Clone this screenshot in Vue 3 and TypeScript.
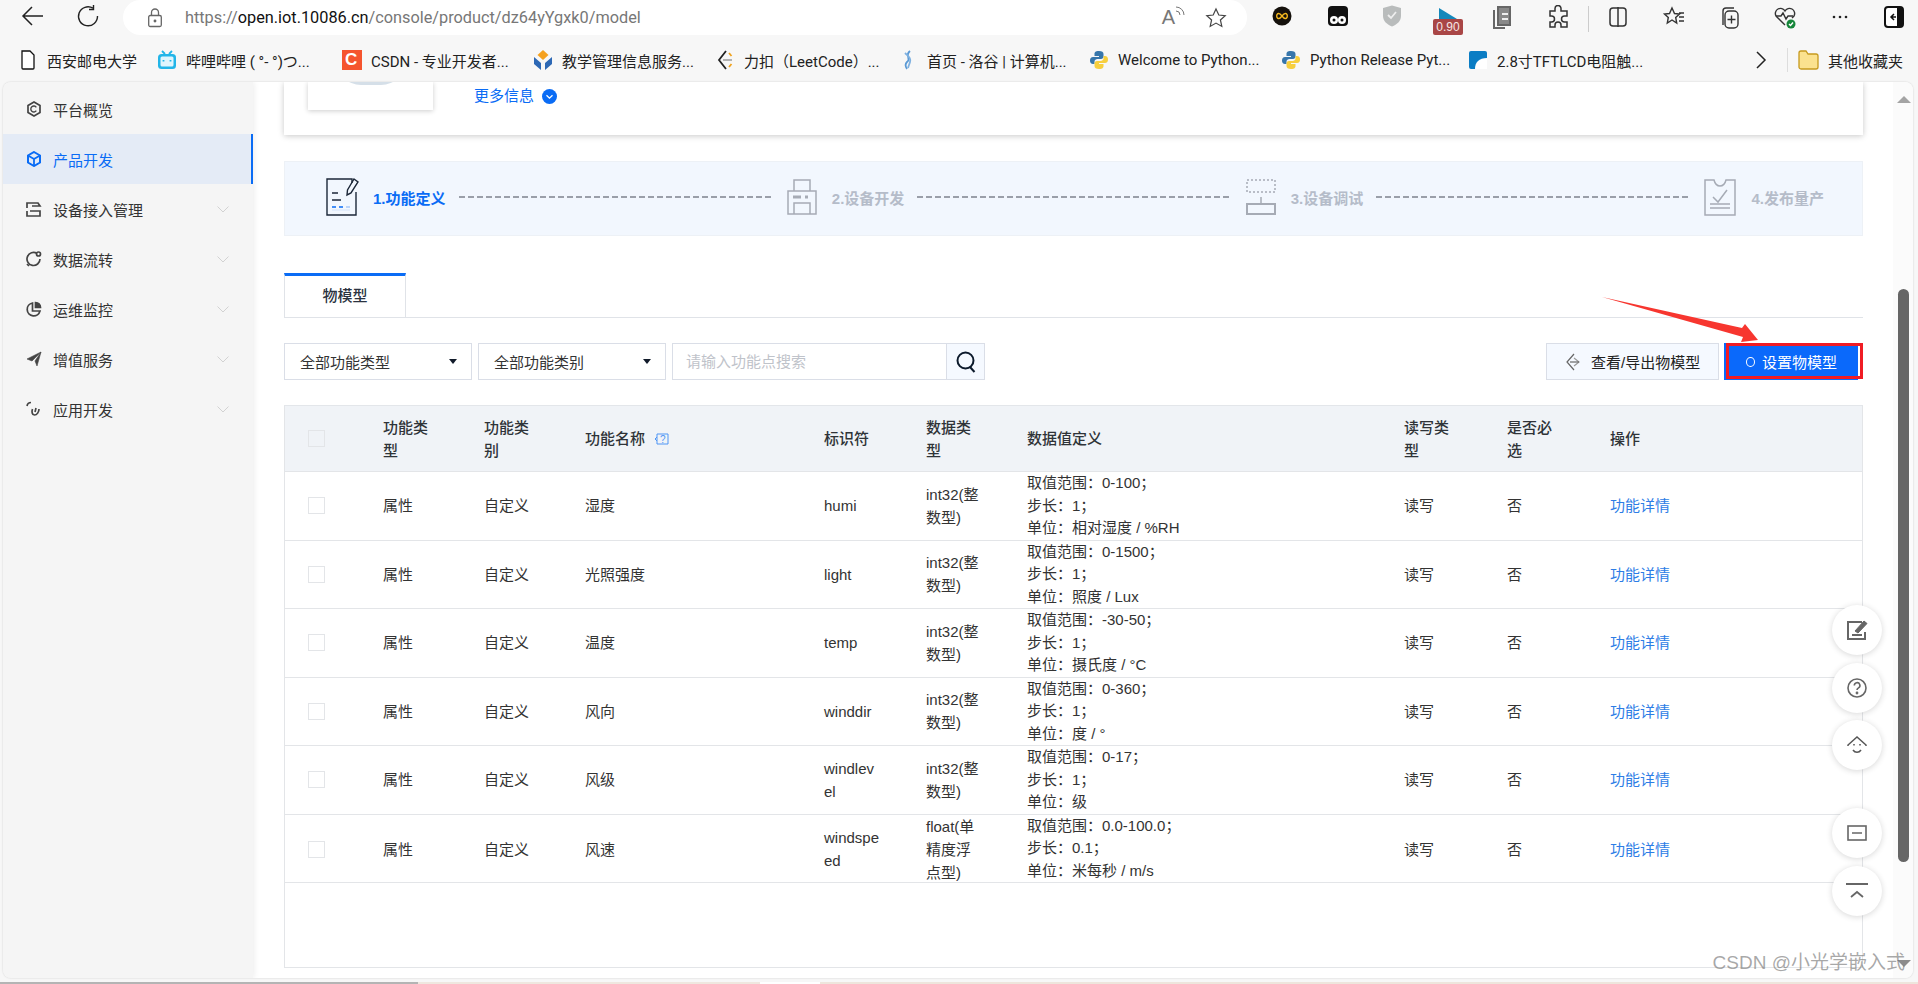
<script setup lang="ts">
interface Bookmark { key: string; label: string; width: number }
const bookmarks: Bookmark[] = [
  { key: 'doc', label: '西安邮电大学', width: 139 },
  { key: 'bili', label: '哔哩哔哩 ( °-  °)つ...', width: 185 },
  { key: 'csdn', label: 'CSDN - 专业开发者...', width: 191 },
  { key: 'edu', label: '教学管理信息服务...', width: 182 },
  { key: 'leet', label: '力扣（LeetCode）...', width: 183 },
  { key: 'luogu', label: '首页 - 洛谷 | 计算机...', width: 191 },
  { key: 'py', label: 'Welcome to Python...', width: 192 },
  { key: 'py', label: 'Python Release Pyt...', width: 187 },
  { key: 'tft', label: '2.8寸TFTLCD电阻触...', width: 305 }
]
const menu = [
  { key: 'home', label: '平台概览', arrow: false, active: false },
  { key: 'cube', label: '产品开发', arrow: false, active: true },
  { key: 'dev', label: '设备接入管理', arrow: true, active: false },
  { key: 'flow', label: '数据流转', arrow: true, active: false },
  { key: 'pie', label: '运维监控', arrow: true, active: false },
  { key: 'send', label: '增值服务', arrow: true, active: false },
  { key: 'app', label: '应用开发', arrow: true, active: false }
]
const rows = [
  { name: '湿度', id: 'humi', type: 'int32(整数型)', range: '0-100', step: '1', unit: '相对湿度 / %RH' },
  { name: '光照强度', id: 'light', type: 'int32(整数型)', range: '0-1500', step: '1', unit: '照度 / Lux' },
  { name: '温度', id: 'temp', type: 'int32(整数型)', range: '-30-50', step: '1', unit: '摄氏度 / °C' },
  { name: '风向', id: 'winddir', type: 'int32(整数型)', range: '0-360', step: '1', unit: '度 / °' },
  { name: '风级', id: 'windlevel', type: 'int32(整数型)', range: '0-17', step: '1', unit: '级' },
  { name: '风速', id: 'windspeed', type: 'float(单精度浮点型)', range: '0.0-100.0', step: '0.1', unit: '米每秒 / m/s' }
]
</script>

<template>
  <div class="browser">
    <header class="toolbar">
      <svg class="nav back" width="24" height="24" viewBox="0 0 24 24" fill="none" stroke="#222" stroke-width="1.5"><path d="M22 12H3M11 3l-9 9 9 9"/></svg>
      <svg class="nav reload" width="24" height="24" viewBox="0 0 24 24" fill="none" stroke="#222" stroke-width="1.4"><path d="M17 4.2A9.5 9.5 0 1 0 21.5 12"/><path d="M17.5 1v4.5H13"/></svg>
      <div class="address">
        <svg class="lock" width="16" height="20" viewBox="0 0 16 20" fill="none" stroke="#666" stroke-width="1.3"><rect x="1.7" y="7.5" width="12.6" height="11" rx="1.5"/><path d="M4.5 7.5V4.5a3.5 3.5 0 0 1 7 0v3"/><circle cx="8" cy="13" r=".8" fill="#666"/></svg>
        <span class="url"><i>https://</i>open.iot.10086.cn<i>/console/product/dz64yYgxk0/model</i></span>
        <span class="read">A<svg width="10" height="14" viewBox="0 0 10 14" fill="none" stroke="#777" stroke-width="1"><path d="M1 5a4 4 0 0 1 4 4M1 1a8 8 0 0 1 8 8"/></svg></span>
        <svg class="addr-star" width="22" height="22" viewBox="0 0 22 22" fill="none" stroke="#444" stroke-width="1.2"><path d="M11 2l2.8 6 6.4.7-4.8 4.3 1.4 6.4L11 16.100l-5.800 3.300 1.400-6.400L1.800 8.700 8.200 8z"/></svg>
      </div>
      <div class="ext-row">
        <svg class="ext e1" width="20" height="20" viewBox="0 0 20 20"><circle cx="10" cy="10" r="9.500" fill="#15110c"/><path d="M10 10c-1.500-2-3-3-4.200-2.300-1.500 1-1.500 3.600 0 4.600C7 13 8.500 12 10 10c1.500-2 3-3 4.200-2.300 1.500 1 1.500 3.600 0 4.600C13 13 11.500 12 10 10z" fill="none" stroke="#f5b81f" stroke-width="1.400"/></svg>
        <svg class="ext e2" width="20" height="20" viewBox="0 0 20 20"><path d="M4 0h12a4 4 0 0 1 4 4v12a4 4 0 0 1-4 4H4a4 4 0 0 1-4-4V4a4 4 0 0 1 4-4z" fill="#111"/><circle cx="6" cy="14" r="4" fill="#fff"/><circle cx="14" cy="14" r="4" fill="#fff"/><circle cx="6" cy="14" r="1.500" fill="#111"/><circle cx="14" cy="14" r="1.500" fill="#111"/></svg>
        <svg class="ext e3" width="20" height="22" viewBox="0 0 20 22"><path d="M1 3l9-2.500L19 3v8c0 5-4 8.500-9 10.500C5 19.500 1 16 1 11z" fill="#b9bcbc"/><path d="M6 10l3 3 5-6" fill="none" stroke="#eee" stroke-width="1.800"/></svg>
        <div class="ext e4"><svg width="18" height="11" viewBox="0 0 18 11"><path d="M0 0l18 11H0z" fill="#1488bb"/></svg><span class="badge">0.90</span></div>
        <svg class="ext e5" width="20" height="24" viewBox="0 0 20 24" fill="none" stroke="#666" stroke-width="2"><path d="M6 2h12v18H6z" fill="#888"/><path d="M2 5v18h11"/><path d="M10 9h6M10 14h6" stroke="#eee"/></svg>
        <svg class="ext e6" width="22" height="24" viewBox="0 0 22 24" fill="none" stroke="#333" stroke-width="1.500"><path d="M8 3.500a3 3 0 0 1 6 0V6h6v5h-2.500a3 3 0 0 0 0 6H20v5h-6v-2a3 3 0 0 0-6 0v2H3v-5h1.500a3 3 0 0 0 0-6H3V6h5z"/></svg>
        <span class="ext-sep"></span>
        <svg class="ext e7" width="20" height="22" viewBox="0 0 20 22" fill="none" stroke="#333" stroke-width="1.500"><rect x="2" y="2" width="16" height="18" rx="3"/><path d="M10 1v20"/></svg>
        <svg class="ext e8" width="24" height="24" viewBox="0 0 24 24" fill="none" stroke="#333" stroke-width="1.400"><path d="M10 3l2.500 5.500 5 .5-3.800 3.500 1 5.500L10 15l-4.700 3 1-5.500L2.500 9l5-.5zM17 8h5M17 12h5M17 16h5"/></svg>
        <svg class="ext e9" width="24" height="26" viewBox="0 0 24 26" fill="none" stroke="#333" stroke-width="1.400"><path d="M5 20V6a3 3 0 0 1 3-3h8"/><rect x="7" y="6" width="13" height="17" rx="4"/><path d="M13.500 10.500v8M9.500 14.500h8"/></svg>
        <svg class="ext e10" width="24" height="24" viewBox="0 0 24 24" fill="none" stroke="#333" stroke-width="1.400"><path d="M12 20l-9-9a5 5 0 0 1 9-5 5 5 0 0 1 9 5l-2 2"/><path d="M3 11h5l2-3 3 6 2-3h5"/><circle cx="18" cy="19" r="4.500" fill="#16863a" stroke="none"/><path d="M16 19l1.500 1.500 2.500-3" stroke="#fff"/></svg>
        <svg class="ext dots" width="16" height="4" viewBox="0 0 16 4" fill="#222"><circle cx="2" cy="2" r="1.300"/><circle cx="8" cy="2" r="1.300"/><circle cx="14" cy="2" r="1.300"/></svg>
        <svg class="ext e11" width="20" height="22" viewBox="0 0 20 22"><rect x="1" y="1" width="18" height="20" rx="3" fill="#fff" stroke="#111" stroke-width="2"/><rect x="13" y="2" width="5" height="18" fill="#111"/><path d="M10 8l-3 3 3 3M7 11h5" fill="none" stroke="#111" stroke-width="1.500"/></svg>
      </div>
    </header>

    <nav class="bookmarks">
      <div v-for="b in bookmarks" :key="b.label" class="bookmark" :style="{ width: b.width + 'px' }">
        <svg class="bm-ico" width="20" height="20" viewBox="0 0 20 20">
          <template v-if="b.key === 'doc'"><path d="M4 1h8l4 4v13a1 1 0 0 1-1 1H5a1 1 0 0 1-1-1z" fill="#fff" stroke="#111" stroke-width="1.300"/></template>
          <template v-else-if="b.key === 'bili'"><rect x="1" y="4" width="18" height="15" rx="3.500" fill="#22b5e8"/><path d="M5 1l3 3M15 1l-3 3" stroke="#22b5e8" stroke-width="1.800"/><rect x="3.500" y="6.500" width="13" height="10" rx="1.500" fill="#dff5fd"/><path d="M6.500 10v1.500M13.500 10v1.500" stroke="#22b5e8" stroke-width="1.800"/></template>
          <template v-else-if="b.key === 'edu'"><path d="M10 0l5.500 5L10 10 4.500 5z" fill="#f5a11e"/><path d="M1 7l7 6v7l-7-6zM19 7l-7 6v7l7-6z" fill="#2d68b5"/></template>
          <template v-else-if="b.key === 'leet'"><path d="M11 1L4 10l7 9" fill="none" stroke="#222" stroke-width="1.800"/><path d="M14 3l2.500 3M14 17l2.500-3" stroke="#f0a31e" stroke-width="1.800"/><path d="M8 10h9" stroke="#aaa" stroke-width="1.800"/></template>
          <template v-else-if="b.key === 'luogu'"><path d="M12 1C6 6 14 8 9 12c-2 2-2 4 0 7" fill="none" stroke="#5b9ad5" stroke-width="1.800"/><path d="M7 3c4 4 6 5 5 9-.5 2-1.500 4-2 6" fill="none" stroke="#7fb1e0" stroke-width="1.800"/></template>
          <template v-else-if="b.key === 'py'"><path d="M10 1C6 1 5.500 2.500 5.500 4v2H10v1H4C2 7 1 8.500 1 10.500S2 14 4 14h1.500v-2.500C5.500 10 7 9 8.500 9H12c1.500 0 2.500-1 2.500-2.500V4C14.500 2 13 1 10 1z" fill="#3776ab"/><path d="M10 19c4 0 4.500-1.500 4.500-3v-2H10v-1h6c2 0 3-1.500 3-3.500S18 6 16 6h-1.500v2.500C14.500 10 13 11 11.500 11H8c-1.500 0-2.500 1-2.500 2.500V16c0 2 1.500 3 4.500 3z" fill="#f7cf3e"/></template>
          <template v-else-if="b.key === 'tft'"><rect x="1" y="1" width="18" height="18" rx="2" fill="#0b7dc4"/><path d="M7 19c0-7 4-11 12-11v11z" fill="#fff"/></template>
          <template v-else><rect x="0" y="0" width="20" height="20" fill="#f5542e"/></template>
        </svg>
        <span v-if="b.key === 'csdn'" class="csdn-c">C</span>
        <span class="bm-text">{{ b.label }}</span>
      </div>
      <svg class="bm-more" width="12" height="20" viewBox="0 0 12 20" fill="none" stroke="#222" stroke-width="1.500"><path d="M2 2l8 8-8 8"/></svg>
      <span class="bm-sep"></span>
      <svg class="bm-folder" width="21" height="20" viewBox="0 0 21 20"><path d="M1 3a2 2 0 0 1 2-2h5l2 3h8a2 2 0 0 1 2 2v11a2 2 0 0 1-2 2H3a2 2 0 0 1-2-2z" fill="#fbe28f" stroke="#c79a1e" stroke-width="1.300"/></svg>
      <span class="bm-text bm-other">其他收藏夹</span>
    </nav>

    <div class="page">
      <aside class="sidebar">
        <div v-for="m in menu" :key="m.label" class="menu-item" :class="{ active: m.active }">
          <svg class="menu-ico" width="16" height="16" viewBox="0 0 16 16" fill="none" stroke="currentColor" stroke-width="1.700">
            <template v-if="m.key === 'home'"><path d="M8 1l6 3.500v7L8 15l-6-3.500v-7z"/><path d="M10.300 6.300a3 3 0 1 0 0 3.400" stroke-width="1.400"/></template>
            <template v-else-if="m.key === 'cube'"><path d="M8 1l6 3.500v7L8 15l-6-3.500v-7z" stroke-width="2"/><path d="M2 4.500L8 8l6-3.500M8 8v7" stroke-width="1.800"/></template>
            <template v-else-if="m.key === 'dev'"><path d="M1 7V2h11l2 3H6" /><path d="M1 10v5h13v-5H4"/></template>
            <template v-else-if="m.key === 'flow'"><path d="M11 2.500A6.500 6.500 0 1 0 14 8"/><circle cx="12.500" cy="3" r="2"/><path d="M1 13l2 2"/></template>
            <template v-else-if="m.key === 'pie'"><path d="M6.500 2a6.500 6.500 0 1 0 7.500 8H6.500z"/><path d="M9.500 1.500a5 5 0 0 1 5 5h-5z" fill="currentColor"/></template>
            <template v-else-if="m.key === 'send'"><path d="M15 1L1 8l5 2zM15 1l-4 14-2-5z" fill="currentColor" stroke-width=".6"/></template>
            <template v-else><path d="M1 5c.5-2.500 2-3.500 4-3.500M6.500 8c-1 2.500-.5 6 2 6s4.500-3 4.500-6"/><path d="M9 11l1-4" /></template>
          </svg>
          <span class="menu-label">{{ m.label }}</span>
          <svg v-if="m.arrow" class="menu-arrow" width="12" height="7" viewBox="0 0 12 7" fill="none" stroke="#d2d2d2" stroke-width="1"><path d="M.5.5L6 6 11.500.5"/></svg>
        </div>
      </aside>

      <main class="main">
        <section class="card">
          <div class="thumb"><span class="thumb-arc"></span></div>
          <span class="more">更多信息</span>
          <svg class="more-ico" width="15" height="15" viewBox="0 0 15 15"><circle cx="7.500" cy="7.500" r="7.500" fill="#0a6cf5"/><path d="M4.500 6.200l3 3 3-3" fill="none" stroke="#fff" stroke-width="1.300"/></svg>
        </section>

        <section class="steps">
          <svg class="step-ico" width="34" height="38" viewBox="0 0 34 38" fill="none" stroke="#1c2738" stroke-width="1.400"><path d="M26 5V1H1v36h29V14"/><path d="M28 1l4 3-7 11-4 2 .5-5z"/><path d="M6 15h6M6 22h9"/><path d="M6 29h4M13 29h4" stroke="#0a6cf5"/><path d="M20 29h4" stroke="#a8c8f8"/><path d="M6 32h18" stroke="#d4e3fa" stroke-width="1"/></svg>
          <span class="step-text on">1.功能定义</span>
          <span class="dash"></span>
          <svg class="step-ico" width="30" height="36" viewBox="0 0 30 36" fill="none" stroke="#a6abb5" stroke-width="1.500"><path d="M7 12V1h16v11"/><path d="M1 12h28v23H1z"/><path d="M7 35V24h16v11"/><path d="M6 18h8M18 18h3" stroke-width="3"/></svg>
          <span class="step-text">2.设备开发</span>
          <span class="dash"></span>
          <svg class="step-ico" width="30" height="36" viewBox="0 0 30 36" fill="none" stroke="#a6abb5" stroke-width="1.500"><path d="M1 1h28v12H1z" stroke-dasharray="2 2"/><path d="M15 18v7"/><path d="M1 25h28v10H1z" stroke-width="2"/></svg>
          <span class="step-text">3.设备调试</span>
          <span class="dash"></span>
          <svg class="step-ico" width="32" height="37" viewBox="0 0 32 37" fill="none" stroke="#a6abb5" stroke-width="1.500"><path d="M1 1h9c1 4 3 6 6 6s5-2 6-6h9v35H1z"/><path d="M9 18l5 5 9-12"/><path d="M6 25h20M6 29h20"/></svg>
          <span class="step-text">4.发布量产</span>
        </section>

        <div class="tabs"><div class="tab">物模型</div></div>

        <div class="filters">
          <div class="select">全部功能类型<i class="caret"></i></div>
          <div class="select">全部功能类别<i class="caret"></i></div>
          <div class="search">
            <span class="placeholder">请输入功能点搜索</span>
            <div class="search-btn"><svg width="20" height="22" viewBox="0 0 20 22" fill="none" stroke="#0c1a2b" stroke-width="2"><circle cx="9.500" cy="9.500" r="8"/><path d="M14 16l4.500 5"/></svg></div>
          </div>
          <span class="grow"></span>
          <div class="btn ghost">
            <svg width="14" height="18" viewBox="0 0 14 18" fill="none" stroke="#666" stroke-width="1.200"><path d="M8 1L1 9l7 8"/><path d="M8 5l5 4-5 4" stroke="#999"/><path d="M4 9h9"/></svg>
            <span>查看/导出物模型</span>
          </div>
          <div class="btn primary">
            <span class="ring"></span>
            <span>设置物模型</span>
            <span class="red-box"></span>
          </div>
        </div>

        <section class="table">
          <div class="tr thead">
            <div class="cell"><span class="check head-check"></span></div>
            <div class="cell">功能类型</div>
            <div class="cell">功能类别</div>
            <div class="cell name-head">功能名称
              <svg width="16" height="14" viewBox="0 0 16 14" fill="none" stroke="#4f95f5"><path d="M3 2v10M3 2h11v10H3M3 5L1 7l2 2"/><text x="6" y="11" font-size="10" fill="#4f95f5" stroke="none" font-family="Liberation Sans">?</text></svg>
            </div>
            <div class="cell">标识符</div>
            <div class="cell">数据类型</div>
            <div class="cell">数据值定义</div>
            <div class="cell">读写类型</div>
            <div class="cell">是否必选</div>
            <div class="cell">操作</div>
          </div>
          <div v-for="r in rows" :key="r.id" class="tr body-row">
            <div class="cell"><span class="check"></span></div>
            <div class="cell">属性</div>
            <div class="cell">自定义</div>
            <div class="cell">{{ r.name }}</div>
            <div class="cell id-cell">{{ r.id }}</div>
            <div class="cell">{{ r.type }}</div>
            <div class="cell def-cell">
              <div>取值范围：{{ r.range }}；</div>
              <div>步长：{{ r.step }}；</div>
              <div>单位：{{ r.unit }}</div>
            </div>
            <div class="cell">读写</div>
            <div class="cell">否</div>
            <div class="cell link">功能详情</div>
          </div>
        </section>
      </main>

      <div class="scrollbar">
        <i class="sb-up"></i>
        <span class="sb-thumb"></span>
        <i class="sb-down"></i>
      </div>

      <div class="fab f1"><svg width="22" height="20" viewBox="0 0 22 20" fill="none" stroke="#666" stroke-width="2"><path d="M16 2H2v17h17v-7"/><path d="M9 11L18 1l3 2.500-9 9.500z" fill="#666" stroke-width="1"/><path d="M6 15h10"/></svg></div>
      <div class="fab f2"><svg width="20" height="20" viewBox="0 0 20 20" fill="none" stroke="#666" stroke-width="1.600"><circle cx="10" cy="10" r="9"/><path d="M7.300 7.500a2.800 2.800 0 1 1 4.200 2.400c-1 .6-1.500 1-1.500 2.200"/><circle cx="10" cy="15" r=".6" fill="#666"/></svg></div>
      <div class="fab f3"><svg width="20" height="20" viewBox="0 0 20 20" fill="none" stroke="#555" stroke-width="1.500"><path d="M1 11v-1l9-8 9 8v1"/><path d="M6 15c2 3 6 3 8 0"/><path d="M7 9v1.500M13 9v1.500"/></svg></div>
      <div class="fab f4"><svg width="20" height="16" viewBox="0 0 20 16" fill="none" stroke="#666" stroke-width="1.600"><rect x="1" y="1" width="18" height="14"/><path d="M5 8h10"/></svg></div>
      <div class="fab f5"><svg width="22" height="16" viewBox="0 0 22 16" fill="none" stroke="#666" stroke-width="1.800"><path d="M0 1h22M5 14l6-5 6 5"/></svg></div>

      <span class="watermark">CSDN @小光学嵌入式</span>
    </div>

    <div class="thumb-strip"></div>

    <svg class="arrow" width="170" height="60" viewBox="0 0 170 60"><path d="M2 0L142 31l3-4L158 43l-17 2 2-5z" fill="#f7362f"/></svg>
  </div>
</template>

<style>
html, body { margin: 0; padding: 0; background: #f7f7f7; overflow: hidden; }
</style>

<style scoped>
.browser {
  position: relative;
  width: 1918px;
  height: 984px;
  overflow: hidden;
  background: #f7f7f7;
  display: flex;
  flex-direction: column;
  font-family: "Liberation Sans", "Noto Sans CJK SC", sans-serif;
  font-size: 15px;
  color: #333;
}
.toolbar { height: 44px; flex: none; display: flex; align-items: flex-start; position: relative; }
.nav { flex: none; margin-top: 4px; }
.back { margin-left: 21px; }
.reload { margin-left: 31px; }
.address {
  margin-left: 23px; margin-top: 0;
  width: 1124px; height: 35px;
  background: #fff;
  border-radius: 18px;
  display: flex; align-items: center;
  position: relative;
  flex: none;
}
.lock { margin-left: 24px; flex: none; }
.url { margin-left: 22px; font: 16.300px "Roboto", sans-serif; color: #111; white-space: nowrap; }
.url i { font-style: normal; color: #777; }
.read { margin-left: auto; font: 20px "Liberation Sans", sans-serif; color: #777; display: flex; align-items: flex-start; }
.addr-star { margin-left: 20px; margin-right: 20px; }
.ext-row { flex: 1; display: flex; align-items: center; height: 35px; position: relative; }
.ext { position: absolute; top: 6px; }
.e1 { left: 25px; } .e2 { left: 81px; } .e3 { left: 135px; top: 5px; }
.e4 { left: 186px; top: 8px; width: 30px; display: flex; flex-direction: column; align-items: center; }
.badge { background: #a94646; color: #f5e5e5; font: 12px "Liberation Sans", sans-serif; width: 30px; text-align: center; height: 16px; line-height: 16px; border-radius: 2px; }
.e5 { left: 245px; top: 5px; } .e6 { left: 300px; top: 5px; }
.ext-sep { position: absolute; left: 341px; top: 6px; width: 1px; height: 26px; background: #ccc; }
.e7 { left: 361px; top: 6px; } .e8 { left: 415px; top: 5px; } .e9 { left: 471px; top: 5px; } .e10 { left: 526px; top: 5px; }
.dots { left: 585px; top: 15px; }
.e11 { left: 637px; top: 6px; }

.bookmarks { height: 38px; flex: none; display: flex; align-items: center; padding-left: 18px; padding-bottom: 6px; box-sizing: border-box; position: relative; }
.bookmark { display: flex; align-items: center; flex: none; position: relative; }
.bm-ico { flex: none; }
.csdn-c { position: absolute; left: 3px; top: 50%; transform: translateY(-50%); color: #fff; font: bold 17px "Liberation Sans", sans-serif; }
.bm-text { margin-left: 9px; font: 15px "Roboto", "Noto Sans CJK SC", sans-serif; color: #222; white-space: nowrap; }
.bm-more { flex: none; margin-left: -18px; }
.bm-sep { width: 1px; height: 24px; background: #ddd; margin-left: 20px; flex: none; }
.bm-folder { margin-left: 10px; flex: none; }
.bm-other { margin-left: 9px; }

.page {
  height: 896px; flex: none;
  margin: 0 5px 0 3px;
  display: flex;
  position: relative;
  background: #fff;
  border-radius: 8px 8px 8px 8px;
  overflow: hidden;
  box-shadow: 0 0 2px rgba(0,0,0,.18);
}
.sidebar { width: 250px; flex: none; background: #f5f5f5; padding-top: 2px; box-shadow: 1px 0 6px rgba(0,0,0,.08); position: relative; z-index: 1; }
.menu-item { height: 50px; display: flex; align-items: center; padding-left: 23px; color: #333; box-sizing: border-box; position: relative; }
.menu-ico { flex: none; color: #444; }
.menu-label { margin-left: 11px; font-size: 15px; }
.menu-arrow { position: absolute; right: 24px; top: 22px; }
.active { background: #e4ebf6; color: #0a6cf5; border-right: 2px solid #0a6cf5; }
.active .menu-ico { color: #0a6cf5; }

.main { width: 1640px; flex: none; padding: 0 30px 0 31px; box-sizing: border-box; display: flex; flex-direction: column; }
.card { height: 53px; flex: none; display: flex; align-items: flex-start; box-shadow: 0 1px 6px rgba(0,0,0,.22); padding-left: 24px; position: relative; background: #fff; }
.thumb { width: 125px; height: 28px; background: #fff; box-shadow: 0 1px 5px rgba(0,0,0,.2); position: relative; overflow: hidden; flex: none; }
.thumb-arc { position: absolute; left: 28px; top: -22px; width: 70px; height: 25px; border-radius: 0 0 40px 40px; background: #d5dfe8; }
.more { margin-left: 41px; margin-top: 5px; color: #0a6cf5; font-size: 15px; line-height: 18px; }
.more-ico { margin-left: 8px; margin-top: 7px; }

.steps {
  height: 75px; flex: none; margin-top: 26px;
  background: #f2f7fe;
  border: 1px solid #edf1f6;
  box-sizing: border-box;
  display: flex; align-items: center;
  padding: 0 38px 3px 41px;
}
.step-ico { flex: none; }
.step-text { margin-left: 15px; font-weight: 700; font-size: 15px; color: #b5bcc9; white-space: nowrap; }
.step-text.on { color: #0a6cf5; margin-left: 13px; }
.dash {
  flex: 1; height: 2px; margin: 0 15px 0 13px;
  background: repeating-linear-gradient(90deg, #9a9fa9 0 6px, transparent 6px 9px);
}
.tabs { margin-top: 37px; height: 45px; flex: none; border-bottom: 1px solid #e0e3e8; box-sizing: border-box; }
.tab {
  width: 122px; height: 44px; box-sizing: border-box;
  border-top: 3px solid #0a6cf5; border-left: 1px solid #e0e3e8; border-right: 1px solid #e0e3e8;
  background: #fff; text-align: center; line-height: 40px; font-weight: 500; color: #2b3340;
  font-size: 15px;
}
.filters { margin-top: 25px; height: 37px; flex: none; display: flex; padding-right: 5px; }
.select {
  width: 188px; height: 37px; box-sizing: border-box; margin-right: 6px;
  border: 1px solid #dadee7; display: flex; align-items: center; padding-left: 15px; position: relative; color: #333;
}
.caret { position: absolute; right: 14px; top: 15px; border: 4.500px solid transparent; border-top: 5px solid #111b2a; border-bottom: 0; }
.search { width: 313px; height: 37px; box-sizing: border-box; border: 1px solid #dadee7; display: flex; }
.placeholder { flex: 1; padding-left: 13px; line-height: 35px; color: #bfc3ca; }
.search-btn { width: 37px; background: #f5f9ff; border-left: 1px solid #dadee7; display: flex; align-items: center; justify-content: center; }
.grow { flex: 1; }
.btn { height: 37px; box-sizing: border-box; display: flex; align-items: center; position: relative; }
.ghost { width: 173px; margin-right: 5px; background: #f5f9ff; border: 1px solid #dadee7; padding-left: 19px; color: #222; }
.ghost span { margin-left: 11px; }
.primary { width: 134px; background: #0a69fb; color: #fff; padding-left: 22px; }
.ring { width: 7px; height: 8px; border: 1.500px solid #fff; border-radius: 50%; }
.primary span:nth-child(2) { margin-left: 7px; }
.red-box { position: absolute; left: 2px; top: 0; width: 137px; height: 36px; border: 3px solid #f01c24; box-sizing: border-box; }

.table { margin-top: 25px; height: 563px; flex: none; border: 1px solid #e3e5e8; border-top-color: #e3e6ea; box-sizing: border-box; }
.tr { display: grid; grid-template-columns: 86px 101px 101px 239px 102px 101px 377px 103px 103px 1fr; box-sizing: border-box; border-bottom: 1px solid #e3e5e8; }
.thead { height: 66px; background: #f0f3f7; font-weight: 500; color: #333; }
.body-row { height: 68.500px; }
.cell { display: flex; align-items: center; padding: 0 33px 0 12px; box-sizing: border-box; line-height: 23px; word-break: break-all; min-width: 0; }
.cell:first-child { padding: 0 0 0 23px; }
.thead .cell { color: #2f3338; }
.name-head svg { margin-left: 9px; flex: none; }
.def-cell { display: block; line-height: 22.500px; padding-top: 0; white-space: nowrap; }
.check { width: 17px; height: 17px; border: 1px solid #e3e5e8; box-sizing: border-box; background: #fff; display: block; }
.head-check { background: #f0f3f7; }
.link { color: #2d7de6; }

.scrollbar { width: 20px; flex: none; background: #fbfbfb; position: relative; }
.sb-thumb { position: absolute; left: 5px; top: 207px; width: 11px; height: 573px; background: #666; border-radius: 6px; }
.sb-up { position: absolute; left: 4px; top: 14px; border: 7px solid transparent; border-bottom: 7px solid #a4a4a4; border-top: 0; }
.sb-down { position: absolute; left: 4px; bottom: 11px; border: 7px solid transparent; border-top: 7px solid #8c8c8c; border-bottom: 0; }

.fab {
  position: absolute; left: 1829px; width: 50px; height: 50px; border-radius: 50%;
  background: #fff; box-shadow: 0 1px 6px rgba(0,0,0,.16);
  display: flex; align-items: center; justify-content: center;
}
.f1 { top: 523px; } .f2 { top: 581px; } .f3 { top: 638px; } .f4 { top: 726px; } .f5 { top: 784px; }
.watermark { position: absolute; right: 8px; bottom: 3px; font-size: 19px; color: rgba(110,110,110,.6); white-space: nowrap; line-height: 24px; }
.thumb-strip {
  height: 2px; flex: none; margin-top: 4px;
  background: linear-gradient(90deg, #b4b4b4 0 418px, #efe7df 418px 760px, #fff 760px 820px, #eee5dc 820px 100%);
}
.arrow { position: absolute; left: 1600px; top: 297px; }
</style>
